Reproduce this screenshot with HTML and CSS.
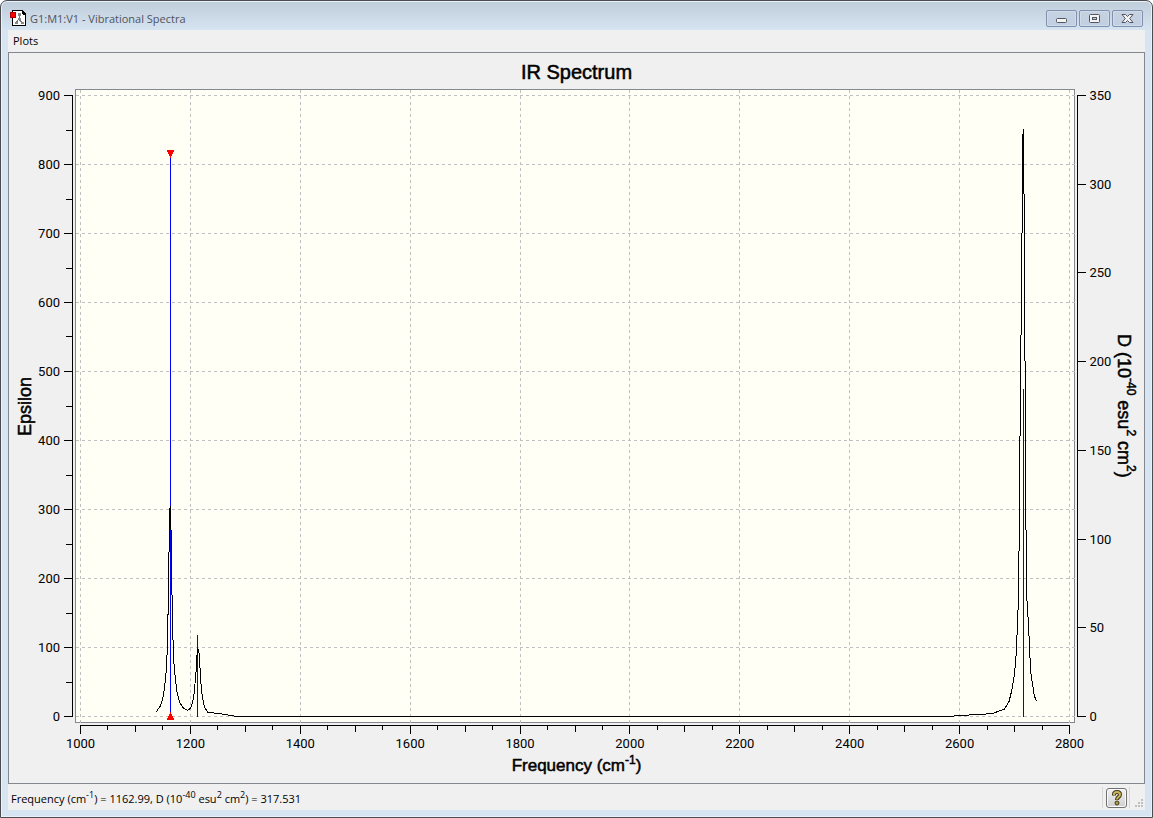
FILE: index.html
```
<!DOCTYPE html>
<html lang="en">

<head>
    <meta charset="UTF-8">
    <meta name="viewport" content="width=device-width, initial-scale=1.0">
    <title>G1:M1:V1 - Vibrational Spectra</title>
    <link rel="stylesheet" href="styles.css">
</head>

<body>
    <div class="window">
        <header class="titlebar">
            <svg class="app_icon" width="16" height="16" viewBox="0 0 16 16" shape-rendering="crispEdges">
                <path d="M2.5 .5h9l4 4v11h-13z" fill="#fff" stroke="#000" />
                <path d="M11 0l1 0l4 4v1h-3z" fill="#000" />
                <path d="M9 4v5M9 9l-3 4M9 9l3 4" stroke="#777" fill="none" />
                <path d="M8 3h3v3h-3zM8 8h3v2h-3zM5 12h3v2h-3zM11 12h3v2h-3z" fill="#888" />
                <path d="M0 2h6v6h-6z" fill="#a00" />
                <path d="M1 3h4v4h-4z" fill="#f00" />
            </svg>
            <h1 class="caption">G1:M1:V1 - Vibrational Spectra</h1>
            <div class="win_btns">
                <button class="win_btn" aria-label="Minimize">
                    <svg width="13" height="11" viewBox="0 0 13 11">
                        <rect x="1.5" y="5.5" width="10" height="4" rx="1" fill="#f4f4f4" stroke="#50555f" />
                    </svg>
                </button>
                <button class="win_btn" aria-label="Maximize">
                    <svg width="13" height="11" viewBox="0 0 13 11">
                        <rect x="1.5" y="1.5" width="10" height="8" rx="1" fill="#f4f4f4" stroke="#50555f" />
                        <rect x="4.5" y="4.5" width="4" height="2" fill="#c3d0e0" stroke="#50555f" />
                    </svg>
                </button>
                <button class="win_btn" aria-label="Close">
                    <svg width="13" height="11" viewBox="0 0 13 11">
                        <path d="M1 1.5h3.5l2 2 2-2H12L8.700 5.500 12 9.500H8.500l-2-2-2 2H1L4.300 5.500z" fill="#f4f4f4" stroke="#50555f" stroke-linejoin="round" />
                    </svg>
                </button>
            </div>
        </header>

        <nav class="menubar">
            <button class="menu_item">Plots</button>
        </nav>

        <main class="chart">
            <h2 class="chart_title">IR Spectrum</h2>
            <div class="side_title left_title">Epsilon</div>
            <div class="plot">
                <svg id="spectrum" role="img" aria-label="IR Spectrum"></svg>
            </div>
            <div class="side_title">D (10<sup>-40</sup> esu<sup>2</sup> cm<sup>2</sup>)</div>
            <div class="x_title">Frequency (cm<sup>-1</sup>)</div>
        </main>

        <footer class="statusbar">
            <div class="status_text">Frequency (cm<sup>-1</sup>) = 1162.99, D (10<sup>-40</sup> esu<sup>2</sup> cm<sup>2</sup>) = 317.531</div>
            <div class="help_box">
                <button class="help_btn" aria-label="Help">
                    <svg width="12" height="16" viewBox="0 0 12 16">
                        <path d="M3 5.500V4.500Q3 2 6 2T9 4.500Q9 6 7.500 7T6 10" fill="none" stroke="#3f3a20" stroke-width="4" />
                        <path d="M3 5V4.500Q3 2 6 2T9 4.500Q9 6 7.500 7T6 9.500" fill="none" stroke="#cdb65a" stroke-width="2" />
                        <circle cx="6" cy="13" r="2" fill="#b39a3c" stroke="#3f3a20" />
                    </svg>
                </button>
            </div>
            <svg class="grip" width="10" height="10" viewBox="0 0 10 10" shape-rendering="crispEdges">
                <path d="M7 0h2v2h-2zM4 3h2v2h-2zM7 3h2v2h-2zM1 6h2v2h-2zM4 6h2v2h-2zM7 6h2v2h-2z" fill="#bfbfbf" />
            </svg>
        </footer>
    </div>
    <script src="chart.js"></script>
</body>

</html>
```
FILE: styles.css
```
body {
    margin: 0;
    background-color: #fff;
    font-family: 'Open Sans', 'Noto Sans', sans-serif;
    font-size: 11px;
    color: #000;
}

button {
    font: inherit;
    color: inherit;
}

.window {
    box-sizing: border-box;
    height: 100vh;
    min-height: 400px;
    padding: 0 7px 7px;
    display: flex;
    flex-direction: column;
    border: 1px solid #4b4b50;
    border-radius: 7px 7px 0 0;
    background: linear-gradient(#bfcddb, #d7e4f2 30px);
    box-shadow: inset 0 0 0 1px #e9f1fa;
}

/* title bar */
.titlebar {
    height: 29px;
    flex: none;
    display: flex;
    align-items: center;
    padding: 5px 2px 0;
    box-sizing: border-box;
}

.caption {
    flex: 1;
    margin: 0 0 0 4px;
    font-size: 11px;
    font-weight: normal;
    color: #50545c;
}

.win_btns {
    display: flex;
    gap: 2px;
}

.win_btn {
    width: 31px;
    height: 17px;
    padding: 0;
    display: flex;
    justify-content: center;
    align-items: center;
    border: 1px solid #8290b0;
    border-radius: 2px;
    background: linear-gradient(#c6d2e1, #c0cfe2);
    box-shadow: inset 0 0 0 1px #d2dce9;
}

/* menu */
.menubar {
    height: 22px;
    flex: none;
    display: flex;
    align-items: flex-start;
    background-color: #f0f0f0;
}

.menu_item {
    height: 20px;
    padding: 0 5px;
    border: none;
    background: none;
}

/* chart panel */
.chart {
    flex: 1;
    min-height: 0;
    display: grid;
    grid-template: 29px minmax(0, 1fr) 31px / 26px minmax(0, 1fr) 30px;
    border: 1px solid #828790;
    background-color: #f0f0f0;
    font-family: 'Liberation Sans', Arial, sans-serif;
    font-size: 18px;
}

.chart_title,
.side_title,
.x_title {
    -webkit-text-stroke: 0.5px #000;
}

.chart sup {
    font-size: 12px;
    line-height: 0;
}

.chart_title {
    grid-column: 1 / -1;
    margin: 0;
    padding-top: 4px;
    font-size: 20px;
    font-weight: normal;
    line-height: 30px;
    text-align: center;
}

.side_title {
    justify-self: start;
    padding-bottom: 22px;
    writing-mode: vertical-rl;
    text-align: center;
    line-height: 20px;
    white-space: nowrap;
}

.left_title {
    justify-self: end;
    padding: 22px 0 0;
    transform: rotate(180deg);
}

.plot {
    min-width: 0;
    min-height: 0;
}

.x_title {
    grid-column: 1 / -1;
    font-size: 17px;
    text-align: center;
    line-height: 28px;
}

#spectrum {
    display: block;
    width: 100%;
    height: 100%;
    shape-rendering: crispEdges;
}

.canvas {
    fill: #fffff5;
    stroke: #828790;
}

.grid {
    stroke: #c0c0c0;
    stroke-dasharray: 3 3;
}

.axis {
    stroke: #000;
}

.tick_label {
    font-family: Roboto, sans-serif;
    font-size: 13px;
}

.stick {
    stroke: #0000ff;
}

.curve {
    fill: none;
    stroke: #000;
}

.marker {
    fill: #ff0000;
}

/* status bar */
.statusbar {
    height: 26px;
    flex: none;
    display: flex;
    align-items: center;
    background-color: #f0f0f0;
}

.status_text {
    flex: 1;
    padding: 2px 0 0 3px;
}

.status_text sup {
    font-size: 9px;
    line-height: 0;
}

.help_box {
    padding: 1px 2px 0 3px;
    border-left: 1px solid #d7d7d7;
    border-right: 1px solid #d7d7d7;
}

.help_btn {
    width: 21px;
    height: 20px;
    padding: 0;
    display: flex;
    justify-content: center;
    align-items: center;
    border: 1px solid #707070;
    border-radius: 3px;
    background: linear-gradient(#f2f2f2, #cfcfcf);
    box-shadow: inset 0 0 0 1px #fafafa;
}

.grip {
    align-self: flex-end;
    margin: 0 1px 1px 4px;
}
```
FILE: chart.js
```
const svg = document.getElementById("spectrum");

// frequency (cm-1), epsilon
const curve = [
    [1138, 7], [1146, 16], [1150, 28], [1153, 42], [1155, 57], [1157, 77], [1158.5, 115],
    [1160, 178], [1161.5, 260], [1163, 305], [1165, 265], [1166.3, 186], [1168, 120],
    [1170, 77], [1173, 52], [1176, 33], [1181, 20], [1186, 13], [1195, 9], [1200, 12],
    [1204, 20], [1207, 35], [1210, 62], [1212, 88], [1213.5, 99], [1216, 91], [1218, 64],
    [1220, 38], [1224, 19], [1227, 12], [1232, 6], [1255, 4], [1284, 0], [2578, 0],
    [2613, 2], [2643, 3], [2662, 5], [2682, 11], [2690, 22], [2695, 38], [2700, 62],
    [2703, 91], [2705.5, 136], [2707.5, 183], [2710.4, 449], [2712, 570], [2714.2, 752],
    [2715.5, 852], [2717.5, 743], [2719, 520], [2721.5, 183], [2724, 151], [2727, 107],
    [2729, 67], [2733, 45], [2736, 30], [2740, 22]
];

// frequency, dipole strength
const sticks = [[1162.99, 317.531], [1213, 46], [2716, 185]];

function add(name, className, attrs, text) {
    const el = document.createElementNS("http://www.w3.org/2000/svg", name);
    el.setAttribute("class", className);
    for (const key in attrs) el.setAttribute(key, attrs[key]);
    if (text !== undefined) el.textContent = text;
    svg.appendChild(el);
}

function line(className, x1, y1, x2, y2) {
    add("line", className, { x1, y1, x2, y2 });
}

// centre of the pixel that holds v
function snap(v) {
    return Math.floor(v) + 0.5;
}

function draw() {
    const w = svg.clientWidth;
    const h = svg.clientHeight;
    const left = 40.5, right = w - 39.5, top = 7.5, bottom = h - 29.5;
    const x0 = left + 5, x1 = right - 5, y0 = bottom - 6, y1 = top + 6;

    const fx = f => x0 + (f - 1000) / 1800 * (x1 - x0);
    const ey = e => y0 - e / 900 * (y0 - y1);
    const dy = d => y0 - d / 350 * (y0 - y1);

    svg.innerHTML = "";
    add("rect", "canvas", { x: left, y: top, width: right - left, height: bottom - top });

    for (let f = 1000; f <= 2800; f += 200) line("grid", snap(fx(f)), top + 0.5, snap(fx(f)), bottom);
    for (let e = 0; e <= 900; e += 100) line("grid", left + 0.5, snap(ey(e)), right, snap(ey(e)));

    // left axis
    line("axis", left - 3, y1 - 0.5, left - 3, y0 + 0.5);
    for (let e = 0; e <= 900; e += 50) {
        const major = e % 100 === 0;
        line("axis", left - (major ? 11.5 : 9.5), snap(ey(e)), left - 3, snap(ey(e)));
        if (major) add("text", "tick_label", { x: 25, y: ey(e) + 4.5, "text-anchor": "end" }, e);
    }

    // right axis
    line("axis", right + 3, y1 - 0.5, right + 3, y0 + 0.5);
    for (let d = 0; d <= 350; d += 50) {
        line("axis", right + 3, snap(dy(d)), right + 11.5, snap(dy(d)));
        add("text", "tick_label", { x: right + 15, y: dy(d) + 4.5 }, d);
    }

    // bottom axis
    line("axis", x0 - 0.5, bottom + 3, x1 + 0.5, bottom + 3);
    for (let f = 1000; f <= 2800; f += 50) {
        const len = f % 200 === 0 ? 8.5 : f % 100 === 0 ? 6.5 : 4.5;
        line("axis", snap(fx(f)), bottom + 3, snap(fx(f)), bottom + 3 + len);
        if (f % 200 === 0) add("text", "tick_label", { x: fx(f), y: bottom + 25.5, "text-anchor": "middle" }, f);
    }

    sticks.forEach(([f, d]) => line("stick", snap(fx(f)), snap(dy(d)), snap(fx(f)), y0 + 0.5));
    add("polyline", "curve", { points: curve.map(([f, e]) => fx(f) + "," + ey(e)).join(" ") });

    // selected mode
    const sx = snap(fx(sticks[0][0]));
    const sy = snap(dy(sticks[0][1]));
    add("polygon", "marker", { points: `${sx - 4},${sy - 3.5} ${sx + 4},${sy - 3.5} ${sx},${sy + 4.5}` });
    add("polygon", "marker", { points: `${sx - 4},${y0 + 3.5} ${sx + 4},${y0 + 3.5} ${sx},${y0 - 4.5}` });
}

draw();
window.addEventListener("resize", draw);
```
